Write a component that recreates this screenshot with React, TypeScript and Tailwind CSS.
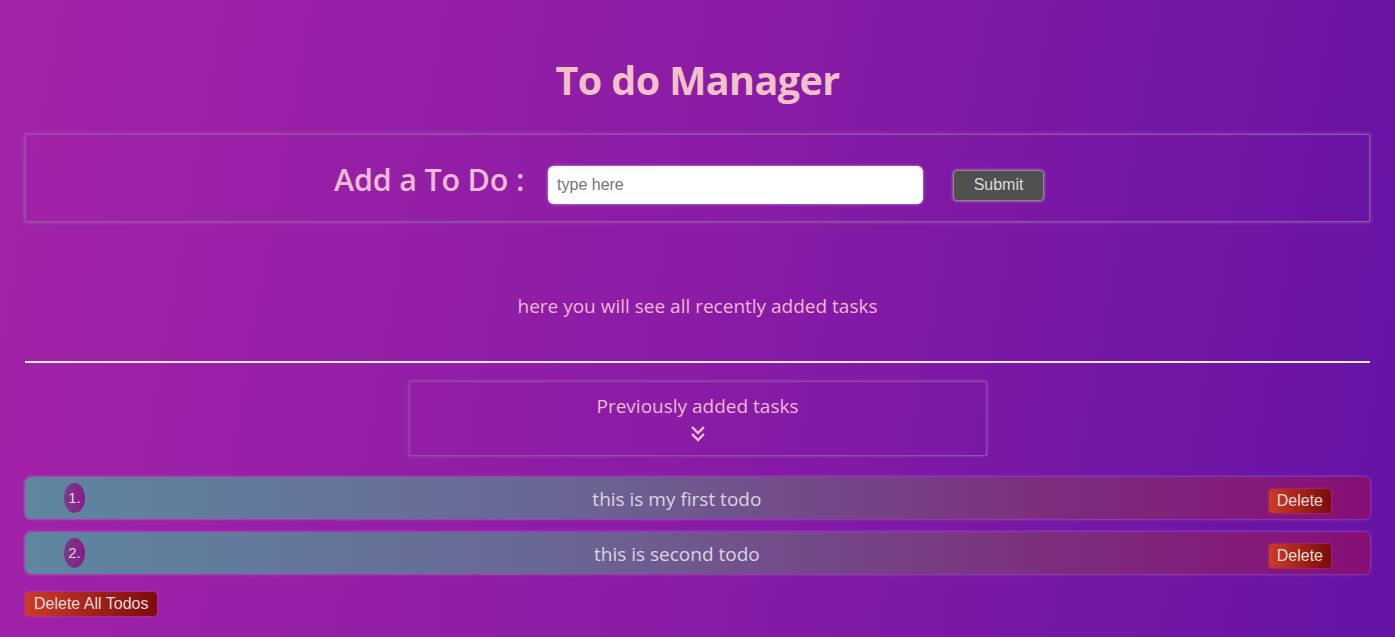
import React from "react";

const todos = ["this is my first todo", "this is second todo"];

export default function App() {
  return (
    <div
      className="min-h-[637px] w-full bg-[linear-gradient(100deg,#a323a8_0%,#8a1ca6_50%,#6413a5_100%)] px-[25px] pb-4 text-[#f0bccb]"
      style={{ fontFamily: '"Open Sans", "Noto Sans", sans-serif' }}
    >
      <h1 className="pt-[54px] text-center text-[39.5px] font-bold leading-[52px] text-[#f2c1c8] tracking-[-0.6px]">
        To do Manager
      </h1>

      <div className="mt-[28px] flex h-[88px] items-center justify-center border border-[#8c5a9a] pt-[14px] pr-[17px] shadow-[0_0_4px_rgba(200,150,200,0.5)]">
        <span className="mr-[24px] mb-[10px] text-[30.5px] font-semibold text-[#efbbd2] tracking-[-0.2px]">Add a To Do :</span>
        <input
          placeholder="type here"
          className="h-[38px] w-[375px] rounded-[6px] bg-white px-[9px] text-[16px] text-black outline-none placeholder:text-[#757575] shadow-[0_0_3px_rgba(255,255,255,0.6)]"
          style={{ fontFamily: '"Liberation Sans", Arial, sans-serif' }}
        />
        <button
          className="ml-[30px] h-[31px] w-[91px] rounded-[4px] border border-[#8a8a8a] bg-[#505050] text-[16px] text-[#dcdcdc] shadow-[0_0_3px_rgba(255,255,255,0.5)]"
          style={{ fontFamily: '"Liberation Sans", Arial, sans-serif' }}
        >
          Submit
        </button>
      </div>

      <p className="mt-[70px] text-center text-[19px] text-[#efb8d2]">
        here you will see all recently added tasks
      </p>

      <div className="mt-[40px] h-[2px] bg-[#e6e6e6]" />

      <div className="mx-auto mt-[18px] flex h-[75px] w-[578px] flex-col items-center border border-[#9050a8] shadow-[0_0_3px_rgba(200,150,200,0.4)]">
        <span className="mt-[11px] text-[19px] leading-[26px] text-[#efb8d2]">Previously added tasks</span>
        <svg width="16" height="18" viewBox="0 0 16 18" className="mt-[6px]" fill="none" stroke="#f2c1c8" strokeWidth="2.4">
          <path d="M2 2 L8 8 L14 2" />
          <path d="M2 9 L8 15 L14 9" />
        </svg>
      </div>

      <div className="mt-[21px] flex flex-col gap-[13px]">
        {todos.map((t, i) => (
          <div
            key={i}
            className="flex h-[42px] items-center rounded-[6px] bg-[linear-gradient(to_right,#5e87a0,#6a6694_40%,#7c307e_75%,#880e76)] shadow-[0_0_3px_rgba(220,150,220,0.7)]"
          >
            <div
              className="ml-[39px] flex h-[30px] w-[21px] shrink-0 items-center justify-center rounded-[50%] bg-[linear-gradient(to_right,#7a3a8c,#8a1a88)] pt-[2px] text-[15px] text-[#e0d8e0]"
              style={{ fontFamily: '"Liberation Sans", Arial, sans-serif' }}
            >
              {i + 1}.
            </div>
            <span className="flex-1 pt-[3px] text-center text-[19px] text-[#dcd4e0]">{t}</span>
            <button
              className="mr-[39px] mt-[6px] h-[24px] shrink-0 rounded-[4px] bg-[linear-gradient(to_right,#cc3b26,#7a0c0c)] px-[8px] text-[16px] leading-[24px] text-[#e6dada] shadow-[0_0_3px_rgba(255,120,120,0.4)]"
              style={{ fontFamily: '"Liberation Sans", Arial, sans-serif' }}
            >
              Delete
            </button>
          </div>
        ))}
      </div>

      <button
        className="mt-[18px] h-[24px] rounded-[4px] bg-[linear-gradient(to_right,#cc3b26,#7a0c0c)] px-[9px] text-[16px] leading-[24px] text-[#e6dada] shadow-[0_0_3px_rgba(255,120,120,0.4)]"
        style={{ fontFamily: '"Liberation Sans", Arial, sans-serif' }}
      >
        Delete All Todos
      </button>
    </div>
  );
}
